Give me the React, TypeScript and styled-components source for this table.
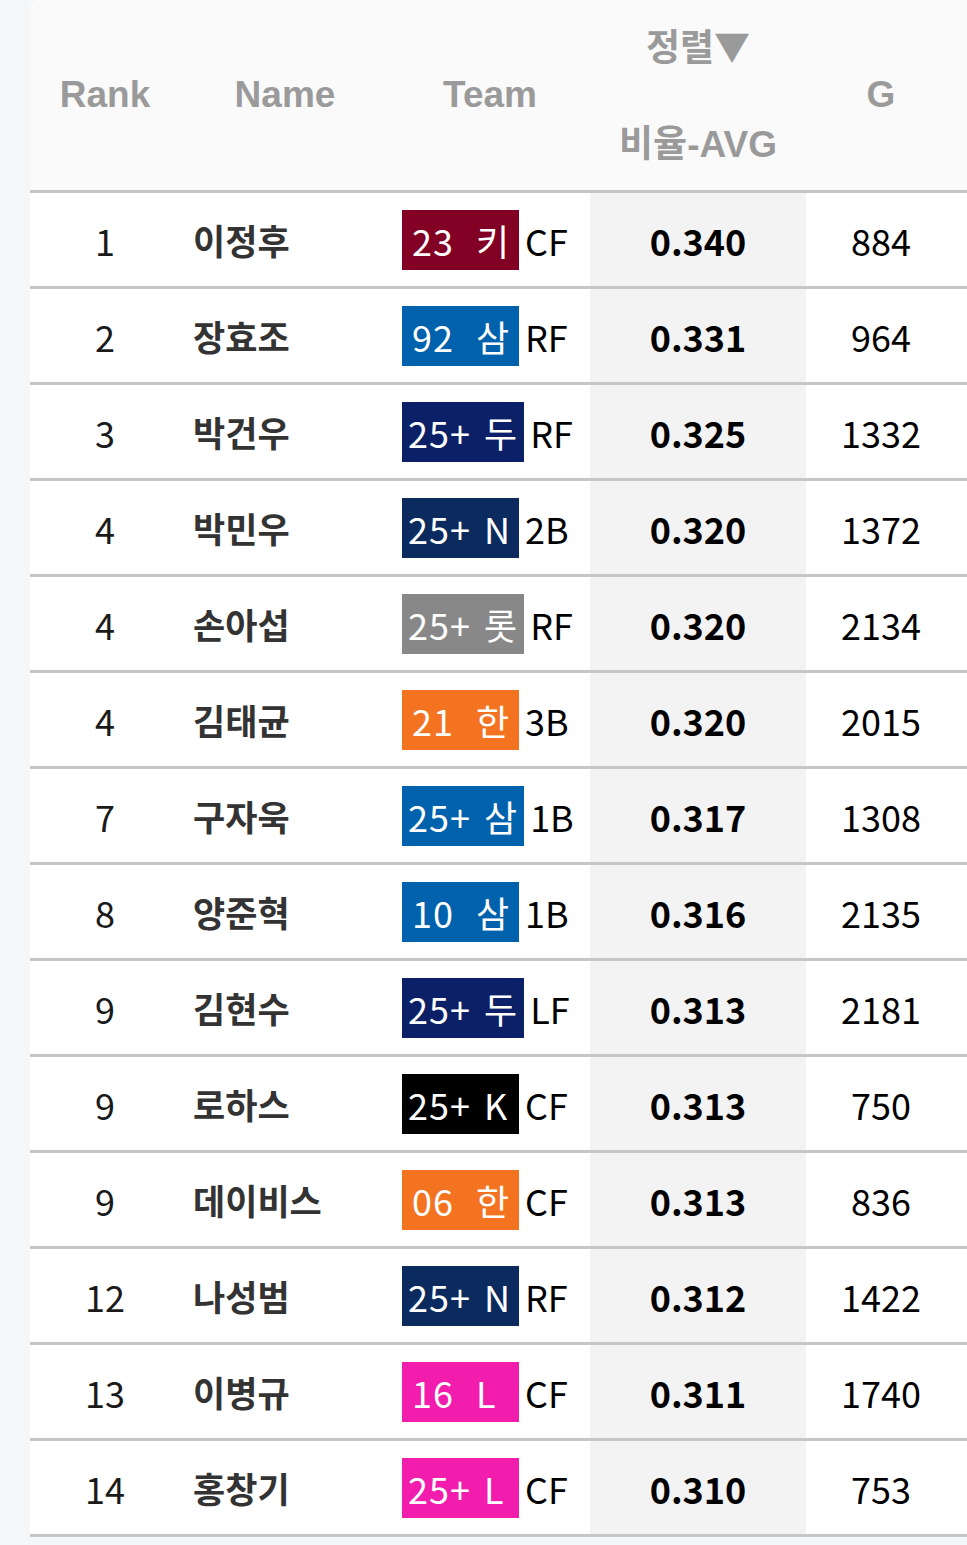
import React from 'react'
import styled, { createGlobalStyle } from 'styled-components'

const GlobalStyle = createGlobalStyle`
  html, body {
    margin: 0;
    padding: 0;
    background: #f5f6f8;
    overflow: hidden;
  }
`

type Player = {
  rank: number
  name: string
  year: string
  team: string
  pos: string
  avg: string
  games: number
}

const teamColors: Record<string, string> = {
  키: '#820024',
  삼: '#0061ac',
  두: '#0b2066',
  N: '#0b2a5e',
  롯: '#888888',
  한: '#f37321',
  K: '#000000',
  L: '#f21dac',
}

const players: Player[] = [
  { rank: 1, name: '이정후', year: '23', team: '키', pos: 'CF', avg: '0.340', games: 884 },
  { rank: 2, name: '장효조', year: '92', team: '삼', pos: 'RF', avg: '0.331', games: 964 },
  { rank: 3, name: '박건우', year: '25+', team: '두', pos: 'RF', avg: '0.325', games: 1332 },
  { rank: 4, name: '박민우', year: '25+', team: 'N', pos: '2B', avg: '0.320', games: 1372 },
  { rank: 4, name: '손아섭', year: '25+', team: '롯', pos: 'RF', avg: '0.320', games: 2134 },
  { rank: 4, name: '김태균', year: '21', team: '한', pos: '3B', avg: '0.320', games: 2015 },
  { rank: 7, name: '구자욱', year: '25+', team: '삼', pos: '1B', avg: '0.317', games: 1308 },
  { rank: 8, name: '양준혁', year: '10', team: '삼', pos: '1B', avg: '0.316', games: 2135 },
  { rank: 9, name: '김현수', year: '25+', team: '두', pos: 'LF', avg: '0.313', games: 2181 },
  { rank: 9, name: '로하스', year: '25+', team: 'K', pos: 'CF', avg: '0.313', games: 750 },
  { rank: 9, name: '데이비스', year: '06', team: '한', pos: 'CF', avg: '0.313', games: 836 },
  { rank: 12, name: '나성범', year: '25+', team: 'N', pos: 'RF', avg: '0.312', games: 1422 },
  { rank: 13, name: '이병규', year: '16', team: 'L', pos: 'CF', avg: '0.311', games: 1740 },
  { rank: 14, name: '홍창기', year: '25+', team: 'L', pos: 'CF', avg: '0.310', games: 753 },
]

export default function App() {
  return (
    <>
      <GlobalStyle />
      <Card>
        <HeaderRow>
          <HeadCell>Rank</HeadCell>
          <HeadCell>Name</HeadCell>
          <HeadCell>Team</HeadCell>
          <HeadCell>
            <SortStack>
              <span>
                정렬<SortArrow>▼</SortArrow>
              </span>
              <span>비율-AVG</span>
            </SortStack>
          </HeadCell>
          <HeadCell>G</HeadCell>
          <HeadCell />
        </HeaderRow>
        {players.map((p, i) => {
          const short = p.year.length < 3
          return (
            <Row key={i}>
              <RankCell>{p.rank}</RankCell>
              <NameCell>{p.name}</NameCell>
              <TeamCell>
                <Badge $bg={teamColors[p.team]} $short={short}>
                  {short ? `${p.year}\u00a0\u00a0${p.team}` : `${p.year}\u00a0${p.team}`}
                </Badge>
                <Pos>{p.pos}</Pos>
              </TeamCell>
              <AvgCell>{p.avg}</AvgCell>
              <GamesCell>{p.games}</GamesCell>
              <Filler />
            </Row>
          )
        })}
      </Card>
    </>
  )
}

const columns = '150px 210px 200px 216px 150px 1fr'

const Card = styled.div`
  margin-left: 30px;
  background: #ffffff;
  border-top-left-radius: 10px;
  overflow: hidden;
  font-family: 'Noto Sans CJK KR', 'Noto Sans', sans-serif;
`

const HeaderRow = styled.div`
  display: grid;
  grid-template-columns: ${columns};
  height: 190px;
  background: #fafafa;
  border-bottom: 3px solid #c4c4c4;
`

const HeadCell = styled.div`
  display: flex;
  align-items: center;
  justify-content: center;
  font-family: 'Liberation Sans', 'Noto Sans CJK KR', sans-serif;
  font-size: 37px;
  font-weight: bold;
  color: #9a9a9a;
`

const SortStack = styled.div`
  display: flex;
  flex-direction: column;
  align-items: center;
  gap: 48px;
  line-height: 48px;
`

const SortArrow = styled.span`
  font-family: 'Noto Sans CJK KR', sans-serif;
  font-size: 36px;
`

const Row = styled.div`
  display: grid;
  grid-template-columns: ${columns};
  height: 93px;
  border-bottom: 3px solid #c6c6c6;
  font-size: 36px;
  color: #111;
`

const Cell = styled.div`
  display: flex;
  align-items: center;
  justify-content: center;
`

const RankCell = styled(Cell)`
  color: #1a1a1a;
`

const NameCell = styled(Cell)`
  justify-content: flex-start;
  padding-left: 13px;
  font-size: 35px;
  font-weight: bold;
  color: #333;
`

const TeamCell = styled(Cell)`
  justify-content: flex-start;
  padding-left: 12px;
  gap: 6px;
`

const Badge = styled.span<{ $bg: string; $short: boolean }>`
  display: inline-block;
  box-sizing: border-box;
  min-width: 117px;
  height: 60px;
  line-height: 60px;
  padding: 0 6px 0 ${p => (p.$short ? 10 : 6)}px;
  letter-spacing: 1px;
  word-spacing: ${p => (p.$short ? 2 : 4)}px;
  background: ${p => p.$bg};
  color: #fff;
  white-space: nowrap;
`

const Pos = styled.span`
  color: #000;
`

const AvgCell = styled(Cell)`
  background: #f3f3f3;
  font-weight: bold;
  color: #000;
`

const GamesCell = styled(Cell)`
  color: #000;
`

const Filler = styled.div``
